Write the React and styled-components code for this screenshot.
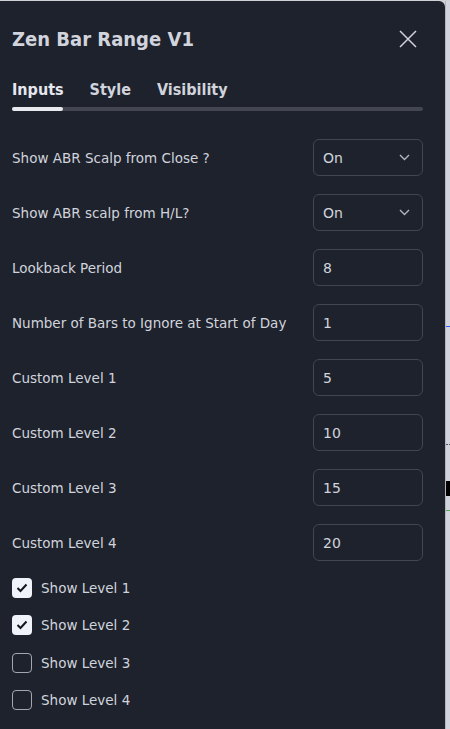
import React, { useState } from 'react'
import styled, { createGlobalStyle } from 'styled-components'

const GlobalStyle = createGlobalStyle`
    html, body {
        margin: 0;
        padding: 0;
        background: #cfd1d7;
    }
    body {
        padding-top: 1px;
        font-family: "DejaVu Sans", "Liberation Sans", sans-serif;
    }
`;

const Page = styled.div`
    display: flex;
    height: 728px;
    overflow: hidden;
`;

const Panel = styled.div`
    width: 445px;
    flex-shrink: 0;
    background: #1e222d;
    border-top-right-radius: 6px;
    padding: 24px 22px 0 12px;
    box-sizing: border-box;
    color: #d1d4dc;
`;

const Header = styled.div`
    display: flex;
    align-items: center;
    justify-content: space-between;
    height: 28px;
`;

const Title = styled.h1`
    margin: 0;
    font-size: 20px;
    font-weight: bold;
    font-stretch: condensed;
    line-height: 28px;
    color: #d1d4dc;
`;

const CloseButton = styled.button`
    background: none;
    border: none;
    padding: 0;
    width: 20px;
    height: 20px;
    margin-right: 5px;
    display: flex;
    align-items: center;
    justify-content: center;
    cursor: pointer;
`;

const Tabs = styled.div`
    display: flex;
    gap: 26px;
    margin-top: 26px;
`;

const Tab = styled.div`
    font-size: 16px;
    font-weight: bold;
    font-stretch: condensed;
    line-height: 22px;
    color: ${p => p.active ? '#e6e8ef' : '#d1d4dc'};
    cursor: pointer;
`;

const Track = styled.div`
    position: relative;
    height: 4px;
    margin-top: 6px;
    background: #434651;
    border-radius: 2px;
`;

const Indicator = styled.div`
    position: absolute;
    left: 0;
    top: 0;
    height: 4px;
    border-radius: 2px;
    background: #e8eaf0;
`;

const Rows = styled.div`
    display: flex;
    flex-direction: column;
    gap: 18px;
    margin-top: 28px;
`;

const Row = styled.div`
    display: flex;
    align-items: center;
    justify-content: space-between;
    height: 37px;
`;

const Label = styled.span`
    font-size: 13.5px;
    color: #d1d4dc;
`;

const Field = styled.div`
    width: 110px;
    height: 37px;
    box-sizing: border-box;
    border: 1px solid #434651;
    border-radius: 6px;
    display: flex;
    align-items: center;
    justify-content: space-between;
    padding: 0 12px 0 9px;
    font-size: 14px;
    color: #d1d4dc;
`;

const Checks = styled.div`
    display: flex;
    flex-direction: column;
    margin-top: 8px;
`;

const CheckRow = styled.label`
    display: flex;
    align-items: center;
    gap: 9px;
    height: 37.5px;
    cursor: pointer;
`;

const Box = styled.span`
    width: 20px;
    height: 20px;
    box-sizing: border-box;
    border-radius: 4px;
    border: ${p => p.checked ? 'none' : '1.5px solid #a3a6af'};
    background: ${p => p.checked ? '#f0f3fa' : 'transparent'};
    display: flex;
    align-items: center;
    justify-content: center;
`;

const Chart = styled.div`
    position: relative;
    flex: 1;
    background: #d1d4dc;
    border-left: 1px solid #b2b5be;
`;

const ChartLine = styled.div`
    position: absolute;
    left: 0;
    right: 0;
    top: ${p => p.top}px;
    height: ${p => p.h || 1}px;
    background: ${p => p.color};
`;

const DottedLine = styled.div`
    position: absolute;
    left: 0;
    right: 0;
    top: ${p => p.top}px;
    border-top: 1px dotted #50535e;
`;

const Chevron = () => (
    <svg width="11" height="7" viewBox="0 0 11 7" fill="none">
        <path d="M1 1l4.5 4.5L10 1" stroke="#b2b5be" strokeWidth="1.4" />
    </svg>
)

const CloseIcon = () => (
    <svg width="18" height="18" viewBox="0 0 18 18">
        <path d="M1 1l16 16M17 1L1 17" stroke="#d1d4dc" strokeWidth="1.5" />
    </svg>
)

const Tick = () => (
    <svg width="12" height="10" viewBox="0 0 12 10" fill="none">
        <path d="M1.5 5l3 3 6-6.5" stroke="#131722" strokeWidth="2" />
    </svg>
)

const fields = [
    { label: 'Show ABR Scalp from Close ?', value: 'On', select: true },
    { label: 'Show ABR scalp from H/L?', value: 'On', select: true },
    { label: 'Lookback Period', value: '8' },
    { label: 'Number of Bars to Ignore at Start of Day', value: '1' },
    { label: 'Custom Level 1', value: '5' },
    { label: 'Custom Level 2', value: '10' },
    { label: 'Custom Level 3', value: '15' },
    { label: 'Custom Level 4', value: '20' },
];

export default function App() {
    const [checks, setChecks] = useState([true, true, false, false]);

    const toggle = (i) => {
        setChecks(checks.map((c, j) => j === i ? !c : c))
    }

    return (
        <>
            <GlobalStyle />
            <Page>
                <Panel>
                    <Header>
                        <Title>Zen Bar Range V1</Title>
                        <CloseButton><CloseIcon /></CloseButton>
                    </Header>
                    <Tabs>
                        <Tab active>Inputs</Tab>
                        <Tab>Style</Tab>
                        <Tab>Visibility</Tab>
                    </Tabs>
                    <Track>
                        <Indicator style={{ width: 51 }} />
                    </Track>
                    <Rows>
                        {fields.map(f => (
                            <Row key={f.label}>
                                <Label>{f.label}</Label>
                                <Field>
                                    {f.value}
                                    {f.select && <Chevron />}
                                </Field>
                            </Row>
                        ))}
                    </Rows>
                    <Checks>
                        {checks.map((c, i) => (
                            <CheckRow key={i} onClick={() => toggle(i)}>
                                <Box checked={c}>{c && <Tick />}</Box>
                                <Label>Show Level {i + 1}</Label>
                            </CheckRow>
                        ))}
                    </Checks>
                </Panel>
                <Chart>
                    <ChartLine top={325} color="#2962ff" />
                    <DottedLine top={443} />
                    <ChartLine top={480} h={15} color="#000" />
                    <ChartLine top={509} color="#4caf50" />
                </Chart>
            </Page>
        </>
    )
}
